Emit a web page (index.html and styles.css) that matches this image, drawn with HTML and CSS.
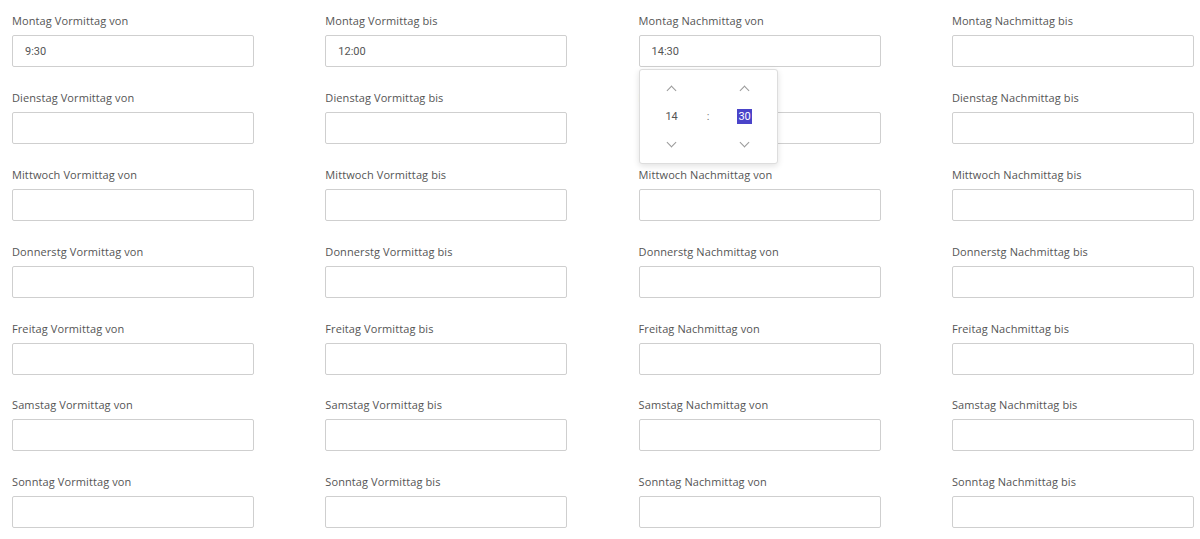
FILE: index.html
```html
<!DOCTYPE html>
<html lang="de">
<head>
    <meta charset="UTF-8">
    <title>Öffnungszeiten</title>
    <link rel="stylesheet" href="styles.css">
</head>
<body>
    <form class="hours-form">
        <div class="field"><label>Montag Vormittag von</label><input type="text" value="9:30"></div>
        <div class="field"><label>Montag Vormittag bis</label><input type="text" value="12:00"></div>
        <div class="field picker-open">
            <label>Montag Nachmittag von</label><input type="text" value="14:30">
            <div class="time-picker">
                <div class="tp-col">
                    <span class="tp-arrow up"></span>
                    <span class="tp-val">14</span>
                    <span class="tp-arrow down"></span>
                </div>
                <div class="tp-sep">:</div>
                <div class="tp-col">
                    <span class="tp-arrow up"></span>
                    <span class="tp-val selected">30</span>
                    <span class="tp-arrow down"></span>
                </div>
            </div>
        </div>
        <div class="field"><label>Montag Nachmittag bis</label><input type="text"></div>

        <div class="field"><label>Dienstag Vormittag von</label><input type="text"></div>
        <div class="field"><label>Dienstag Vormittag bis</label><input type="text"></div>
        <div class="field"><label>Dienstag Nachmittag von</label><input type="text"></div>
        <div class="field"><label>Dienstag Nachmittag bis</label><input type="text"></div>

        <div class="field"><label>Mittwoch Vormittag von</label><input type="text"></div>
        <div class="field"><label>Mittwoch Vormittag bis</label><input type="text"></div>
        <div class="field"><label>Mittwoch Nachmittag von</label><input type="text"></div>
        <div class="field"><label>Mittwoch Nachmittag bis</label><input type="text"></div>

        <div class="field"><label>Donnerstg Vormittag von</label><input type="text"></div>
        <div class="field"><label>Donnerstg Vormittag bis</label><input type="text"></div>
        <div class="field"><label>Donnerstg Nachmittag von</label><input type="text"></div>
        <div class="field"><label>Donnerstg Nachmittag bis</label><input type="text"></div>

        <div class="field"><label>Freitag Vormittag von</label><input type="text"></div>
        <div class="field"><label>Freitag Vormittag bis</label><input type="text"></div>
        <div class="field"><label>Freitag Nachmittag von</label><input type="text"></div>
        <div class="field"><label>Freitag Nachmittag bis</label><input type="text"></div>

        <div class="field"><label>Samstag Vormittag von</label><input type="text"></div>
        <div class="field"><label>Samstag Vormittag bis</label><input type="text"></div>
        <div class="field"><label>Samstag Nachmittag von</label><input type="text"></div>
        <div class="field"><label>Samstag Nachmittag bis</label><input type="text"></div>

        <div class="field"><label>Sonntag Vormittag von</label><input type="text"></div>
        <div class="field"><label>Sonntag Vormittag bis</label><input type="text"></div>
        <div class="field"><label>Sonntag Nachmittag von</label><input type="text"></div>
        <div class="field"><label>Sonntag Nachmittag bis</label><input type="text"></div>
    </form>
</body>
</html>
```

FILE: styles.css
```css
* {
    margin: 0;
    padding: 0;
    box-sizing: border-box;
}

body {
    background-color: #ffffff;
    color: #555555;
    font-family: 'Open Sans', 'Liberation Sans', sans-serif;
    overflow: hidden;
}

.hours-form {
    display: grid;
    grid-template-columns: repeat(4, 242px);
    column-gap: 71.3px;
    row-gap: 22.9px;
    padding: 13px 0 0 12px;
}

.field {
    display: flex;
    flex-direction: column;
    position: relative;
}

.field label {
    font-size: 11px;
    line-height: 15px;
    color: #555555;
    margin-bottom: 7px;
    letter-spacing: 0.1px;
}

.field input {
    height: 32px;
    width: 100%;
    border: 1px solid #cfcfcf;
    border-radius: 2px;
    padding: 0 12px;
    font-family: Roboto, 'Liberation Sans', sans-serif;
    font-size: 11px;
    color: #555555;
    background-color: #ffffff;
    outline: none;
}

.time-picker {
    position: absolute;
    top: 56px;
    left: 0;
    width: 139px;
    height: 95px;
    background-color: #ffffff;
    border: 1px solid #dddddd;
    border-radius: 3px;
    box-shadow: 0 2px 6px rgba(0, 0, 0, 0.12);
    display: flex;
    justify-content: space-between;
    padding: 0 20px;
    z-index: 10;
}

.tp-col {
    display: flex;
    flex-direction: column;
    align-items: center;
    justify-content: space-between;
    padding: 14px 0 14px;
    width: 24px;
}

.tp-arrow {
    width: 7px;
    height: 7px;
    border-left: 1px solid #9a9a9a;
    border-top: 1px solid #9a9a9a;
}

.tp-arrow.up {
    transform: rotate(45deg);
    margin-top: 3px;
}

.tp-arrow.down {
    transform: rotate(225deg);
    margin-bottom: 3px;
}

.tp-val {
    font-family: Roboto, 'Liberation Sans', sans-serif;
    font-size: 11px;
    line-height: 15px;
    color: #555555;
    padding: 0 1px;
}

.tp-val.selected {
    background-color: #4a44c9;
    color: #ffffff;
}

.tp-sep {
    font-family: Roboto, 'Liberation Sans', sans-serif;
    font-size: 11px;
    color: #777777;
    align-self: center;
}
```
